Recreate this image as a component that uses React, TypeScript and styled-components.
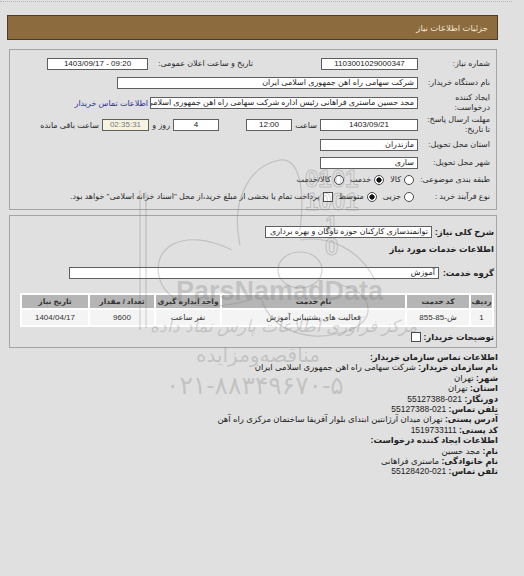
import React from 'react'
import styled, { createGlobalStyle } from 'styled-components'

const GlobalStyle = createGlobalStyle`
  html, body {
    margin: 0;
    padding: 0;
    background: #e0e0e0;
  }
`

const FONT = `"Liberation Sans", "DejaVu Sans", sans-serif`

const Page = styled.div`
  position: relative;
  width: 524px;
  height: 576px;
  overflow: hidden;
  background: #e0e0e0;
  direction: rtl;
  font-family: ${FONT};
  font-size: 8px;
  color: #222;
`

const TopRule = styled.div`
  height: 1px;
  margin: 0 12px 0 0;
  border-bottom: 1px dotted #b4b4b4;
`

const Content = styled.div`
  margin: 0 26px 0 7px;
`

const TitleBar = styled.div`
  margin-top: 13px;
  height: 25px;
  box-sizing: border-box;
  display: flex;
  align-items: center;
  padding-right: 9px;
  background: #8c6b3f;
  border: 1px solid #4c3b27;
  color: #f2e9d6;
  font-size: 8.5px;
`

const Panel = styled.div<{ $top: number }>`
  margin: ${p => p.$top}px 1px 0 2px;
  border: 1px solid #a4a4a4;
  padding: ${p => (p.$top > 6 ? '4px 6px 4px 0' : '7px 2px 1px 0')};
`

const Row = styled.div<{ $h: number }>`
  display: flex;
  align-items: center;
  height: ${p => p.$h}px;
`

const Label = styled.div`
  flex: none;
  width: 72px;
  text-align: right;
  line-height: 10px;
  color: #2a2a2a;
`

const SideLabel = styled.div<{ $w?: number; $gap?: number }>`
  flex: none;
  ${p => (p.$w ? `width: ${p.$w}px;` : '')}
  margin-right: ${p => p.$gap ?? 0}px;
  padding: 0 3px;
  box-sizing: border-box;
  text-align: right;
  white-space: nowrap;
  color: #2a2a2a;
`

const Field = styled.div<{ $w: number; $ltr?: boolean; $gap?: number; $muted?: boolean }>`
  flex: none;
  width: ${p => p.$w}px;
  height: 12px;
  box-sizing: border-box;
  margin-right: ${p => p.$gap ?? 0}px;
  padding: 0 3px;
  background: ${p => (p.$muted ? '#f6f4e0' : '#fff')};
  border: 1px solid #5f5f5f;
  color: ${p => (p.$muted ? '#777' : '#222')};
  line-height: 10px;
  white-space: nowrap;
  overflow: hidden;
  direction: ${p => (p.$ltr ? 'ltr' : 'rtl')};
  text-align: ${p => (p.$ltr ? 'center' : 'right')};
`

const Link = styled.span`
  margin-right: 2px;
  color: #2b2f9c;
  white-space: nowrap;
`

const Choice = styled.label<{ $gap?: number }>`
  display: flex;
  align-items: center;
  gap: 3px;
  margin-right: ${p => p.$gap ?? 0}px;
  white-space: nowrap;
  color: #2a2a2a;
`

const Radio = styled.span<{ $on?: boolean }>`
  flex: none;
  width: 10px;
  height: 10px;
  box-sizing: border-box;
  border-radius: 50%;
  border: 1px solid #4a4a4a;
  background: ${p => (p.$on ? 'radial-gradient(circle, #111 0 2.4px, #fff 2.8px)' : '#fff')};
`

const Check = styled.span<{ $gap?: number }>`
  flex: none;
  width: 10px;
  height: 10px;
  box-sizing: border-box;
  margin-right: ${p => p.$gap ?? 0}px;
  border: 1px solid #4a4a4a;
  background: #fff;
`

const Strong = styled.span`
  font-weight: bold;
  font-size: 8.5px;
  color: #222;
  white-space: nowrap;
`

const Heading = styled.div<{ $h: number }>`
  height: ${p => p.$h}px;
  display: flex;
  align-items: center;
  font-weight: bold;
  font-size: 8.5px;
`

const Grid = styled.table`
  width: 474px;
  margin: 3px 0 0 8px;
  table-layout: fixed;
  border-spacing: 2px;
  background: #fff;
  font-size: 8px;
`

const Th = styled.th`
  height: 13px;
  padding: 0;
  background: #b5b5b5;
  color: #333;
  font-weight: bold;
  font-size: 7.5px;
  white-space: nowrap;
`

const Td = styled.td`
  height: 15px;
  padding: 0;
  background: #f4f4f4;
  text-align: center;
  white-space: nowrap;
  color: #333;
`

const Contacts = styled.div`
  margin-top: 4px;
  font-size: 8.5px;
  line-height: 10.4px;
`

const Line = styled.div`
  white-space: nowrap;
  color: #222;
`

const Key = styled.b`
  font-weight: bold;
`

const Ltr = styled.span`
  direction: ltr;
  unicode-bidi: isolate;
`

const Watermark = styled.div`
  position: absolute;
  inset: 0;
  pointer-events: none;
  direction: ltr;
`

const Mark = styled.div<{ $x: number; $y: number; $size: number; $italic?: boolean; $bold?: boolean }>`
  position: absolute;
  left: ${p => p.$x}px;
  top: ${p => p.$y}px;
  font-size: ${p => p.$size}px;
  font-style: ${p => (p.$italic ? 'italic' : 'normal')};
  font-weight: ${p => (p.$bold ? 'bold' : 'normal')};
  color: rgba(120, 120, 120, 0.28);
  white-space: nowrap;
  line-height: 1;
`

const RtlText = styled.span`
  direction: rtl;
  unicode-bidi: isolate;
`

const BinaryMark = styled(Mark)`
  color: transparent;
  -webkit-text-stroke: 1px rgba(120, 120, 120, 0.35);
  line-height: 0.95;
  white-space: pre;
  text-align: center;
`

const contactLines: [string, string, boolean?][] = [
  ['نام سازمان خریدار:', 'شرکت سهامی راه اهن جمهوری اسلامی ایران'],
  ['شهر:', 'تهران'],
  ['استان:', 'تهران'],
  ['دورنگار:', '55127388-021', true],
  ['تلفن تماس:', '55127388-021', true],
  ['آدرس پستی:', 'تهران میدان آرژانتین ابتدای بلوار آفریقا ساختمان مرکزی راه آهن'],
  ['کد پستی:', '1519733111', true],
]

const creatorLines: [string, string, boolean?][] = [
  ['نام:', 'مجد حسین'],
  ['نام خانوادگی:', 'ماستری فراهانی'],
  ['تلفن تماس:', '55128420-021', true],
]

const renderLine = ([k, v, ltr]: [string, string, boolean?]) => (
  <Line key={k + v}>
    <Key>{k}</Key> {ltr ? <Ltr>{v}</Ltr> : v}
  </Line>
)

export default function App() {
  return (
    <Page>
      <GlobalStyle />
      <TopRule />
      <Content>
        <TitleBar>جزئیات اطلاعات نیاز</TitleBar>

        <Panel $top={9}>
          <Row $h={19}>
            <Label>شماره نیاز:</Label>
            <Field $w={97} $ltr>1103001029000347</Field>
            <SideLabel $w={108} $gap={65}>تاریخ و ساعت اعلان عمومی:</SideLabel>
            <Field $w={101} $ltr>1403/09/17 - 09:20</Field>
          </Row>
          <Row $h={19}>
            <Label>نام دستگاه خریدار:</Label>
            <Field $w={301}>شرکت سهامی راه اهن جمهوری اسلامی ایران</Field>
          </Row>
          <Row $h={22}>
            <Label>
              ایجاد کننده
              <br />
              درخواست:
            </Label>
            <Field $w={268}>مجد حسین ماستری فراهانی رئیس اداره شرکت سهامی راه اهن جمهوری اسلامی ایران</Field>
            <Link>اطلاعات تماس خریدار</Link>
          </Row>
          <Row $h={22}>
            <Label>
              مهلت ارسال پاسخ:
              <br />
              تا تاریخ:
            </Label>
            <Field $w={98} $ltr>1403/09/21</Field>
            <SideLabel $w={28}>ساعت</SideLabel>
            <Field $w={46} $ltr>12:00</Field>
            <Field $w={46} $ltr $gap={27}>4</Field>
            <SideLabel $w={24}>روز و</SideLabel>
            <Field $w={47} $ltr $muted>02:35:31</Field>
            <SideLabel>ساعت باقی مانده</SideLabel>
          </Row>
          <Row $h={18}>
            <Label>استان محل تحویل:</Label>
            <Field $w={98}>مازندران</Field>
          </Row>
          <Row $h={17}>
            <Label>شهر محل تحویل:</Label>
            <Field $w={98}>ساری</Field>
          </Row>
          <Row $h={17}>
            <Label>طبقه بندی موضوعی:</Label>
            <Choice $gap={4}>
              <Radio />
              کالا
            </Choice>
            <Choice $gap={6}>
              <Radio $on />
              خدمت
            </Choice>
            <Choice $gap={6}>
              <Radio />
              کالا/خدمت
            </Choice>
          </Row>
          <Row $h={17}>
            <Label>نوع فرآیند خرید :</Label>
            <Choice $gap={4}>
              <Radio />
              جزیی
            </Choice>
            <Choice $gap={6}>
              <Radio $on />
              متوسط
            </Choice>
            <Choice $gap={6}>
              <Check />
              پرداخت تمام یا بخشی از مبلغ خرید،از محل "اسناد خزانه اسلامی" خواهد بود.
            </Choice>
          </Row>
        </Panel>

        <Panel $top={5}>
          <Row $h={18}>
            <Strong>شرح کلی نیاز:</Strong>
            <Field $w={167} $gap={3}>توانمندسازی کارکنان حوزه ناوگان و بهره برداری</Field>
          </Row>
          <Heading $h={15}>اطلاعات خدمات مورد نیاز</Heading>
          <Row $h={34}>
            <Strong>گروه خدمت:</Strong>
            <Field $w={370} $gap={4}>آموزش</Field>
          </Row>
          <Grid>
            <colgroup>
              <col style={{ width: 21 }} />
              <col style={{ width: 62 }} />
              <col />
              <col style={{ width: 64 }} />
              <col style={{ width: 64 }} />
              <col style={{ width: 66 }} />
            </colgroup>
            <thead>
              <tr>
                <Th>ردیف</Th>
                <Th>کد خدمت</Th>
                <Th>نام خدمت</Th>
                <Th>واحد اندازه گیری</Th>
                <Th>تعداد / مقدار</Th>
                <Th>تاریخ نیاز</Th>
              </tr>
            </thead>
            <tbody>
              <tr>
                <Td>1</Td>
                <Td>
                  <Ltr>ش-85-855</Ltr>
                </Td>
                <Td>فعالیت های پشتیبانی آموزش</Td>
                <Td>نفر ساعت</Td>
                <Td>9600</Td>
                <Td>1404/04/17</Td>
              </tr>
            </tbody>
          </Grid>
          <Row $h={19}>
            <Strong>توضیحات خریدار:</Strong>
            <Check $gap={2} />
          </Row>
        </Panel>

        <Contacts>
          <Line>
            <Key>اطلاعات تماس سازمان خریدار:</Key>
          </Line>
          {contactLines.map(renderLine)}
          <Line>
            <Key>اطلاعات ایجاد کننده درخواست:</Key>
          </Line>
          {creatorLines.map(renderLine)}
        </Contacts>
      </Content>

      <Watermark>
        <svg width="524" height="576" style={{ position: 'absolute', left: 0, top: 0 }}>
          <g fill="none" stroke="rgba(120,120,120,0.3)" strokeWidth="1.2">
            <path d="M232 250 C180 225 150 250 160 280 C170 310 215 310 250 300" />
            <path d="M240 245 C230 200 250 165 280 160 C300 158 305 190 300 230" />
            <path d="M262 300 C270 330 310 345 350 330 C380 318 370 290 340 285" />
            <path d="M300 240 C330 235 360 250 375 280" />
            <ellipse cx="300" cy="270" rx="22" ry="18" />
            <path d="M140 190 L140 330 M146 192 L146 328" />
          </g>
        </svg>
        <BinaryMark $x={305} $y={168} $size={24} $bold>{'0101\n1001\n 1 \n 0 '}</BinaryMark>
        <Mark $x={176} $y={278} $size={27} $bold>ParsNamadData</Mark>
        <Mark $x={150} $y={318} $size={17} $italic>
          <RtlText>مرکز فرآوری اطلاعات پارس نماد داده</RtlText>
        </Mark>
        <Mark $x={196} $y={345} $size={20}>
          <RtlText>مناقصه‌ومزایده</RtlText>
        </Mark>
        <Mark $x={166} $y={373} $size={25}>۰۲۱-۸۸۳۴۹۶۷۰-۵</Mark>
      </Watermark>
    </Page>
  )
}
